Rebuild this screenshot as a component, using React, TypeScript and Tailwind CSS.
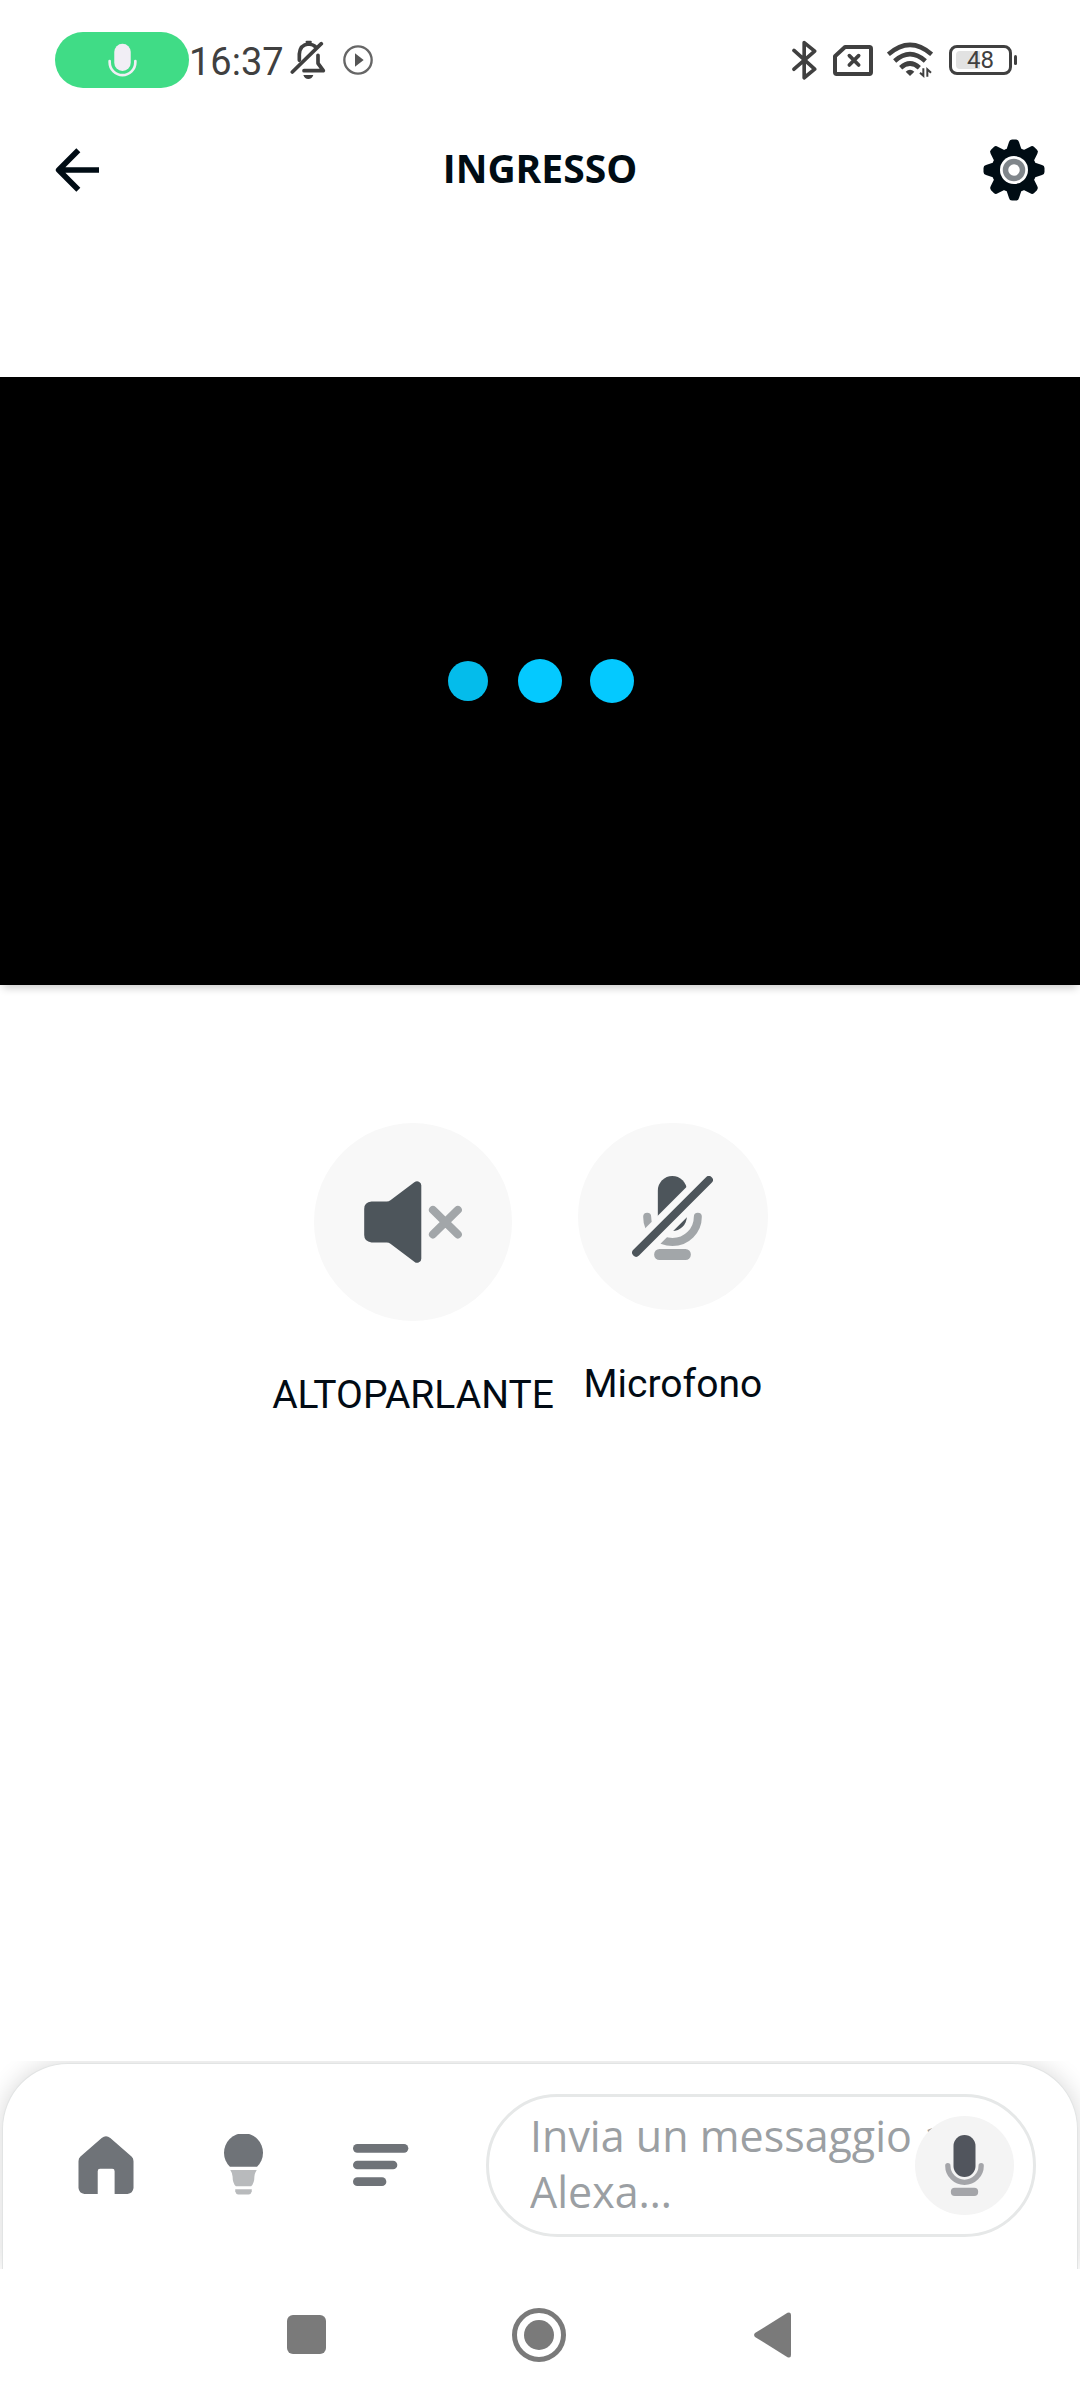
import { useState, type ReactNode } from 'react';

const BluetoothIcon = () => (
  <svg viewBox="0 0 76 120" className="w-[25px] h-10" fill="none" stroke="#404040" strokeWidth="11" strokeLinecap="round" strokeLinejoin="round">
    <path d="M6 31 69 88 37 114V7L69 33 6 88" />
  </svg>
);

const NoSimIcon = () => (
  <svg viewBox="0 0 120 93" className="w-10 h-[31px]" fill="none" stroke="#404040" strokeLinejoin="round" strokeLinecap="round">
    <path d="M36 6H109Q114 6 114 11V82Q114 87 109 87H11Q6 87 6 82V34Z" strokeWidth="12" />
    <path d="M49 32 77 60M77 32 49 60" strokeWidth="11" />
  </svg>
);

const WifiIcon = () => (
  <svg viewBox="0 0 138 108" className="w-[46px] h-9" fill="none" stroke="#404040" strokeWidth="14">
    <path d="M4 37Q69 -20 134 37" />
    <path d="M23 57Q69 16 115 57" />
    <path d="M41 77Q69 52 97 77" />
    <path d="M56 89Q69 77 82 89L69 102Z" fill="#404040" stroke="none" />
    <path d="M109 79V101L99 92M121 104V82L132 92" strokeWidth="6" />
  </svg>
);

const BellOffIcon = () => (
  <svg viewBox="0 0 111 120" className="w-[37px] h-10" fill="none" stroke="#404040" strokeWidth="11" strokeLinejoin="round" strokeLinecap="round">
    <path d="M28 61V42Q30 14 56 12Q70 13 78 22" />
    <path d="M50 6H62" strokeWidth="7" />
    <path d="M7 96 94 11" />
    <path d="M84 46V70L100 92H42" />
    <path d="M40 105H70Q66 117 55 117T40 105Z" fill="#404040" stroke="none" />
  </svg>
);

const PlayCircleIcon = () => (
  <svg viewBox="0 0 90 90" className="w-[30px] h-[30px]">
    <circle cx="45" cy="45" r="41" fill="none" stroke="#666" strokeWidth="7" />
    <path d="M36 25 62 45 36 65Z" fill="#555" />
  </svg>
);

const RecordingMicIcon = () => (
  <svg viewBox="0 0 88 102" className="w-[29px] h-[34px]">
    <rect x="19" y="2" width="50" height="82" rx="25" fill="#f1eef5" />
    <path d="M5 54V58A39 39 0 0 0 83 58V54" fill="none" stroke="#f1eef5" strokeWidth="8" strokeLinecap="round" />
  </svg>
);

const BackIcon = () => (
  <svg viewBox="0 0 132 132" className="w-11 h-11" fill="none" stroke="#000c14" strokeWidth="17">
    <path d="M132 66H10M70 7 11 66 70 125" strokeLinejoin="round" />
  </svg>
);

const TEETH = [0, 45, 90, 135, 180, 225, 270, 315];

const GearIcon = () => (
  <svg viewBox="-31 -31 62 62" className="w-[62px] h-[62px]">
    <circle r="22.5" fill="#000c14" />
    {TEETH.map(a => (
      <path
        key={a}
        d="M-8 -19 -5 -28Q-4.500 -30.500 -2 -30.500H2Q4.500 -30.500 5 -28L8 -19Z"
        fill="#000c14"
        transform={`rotate(${a})`}
      />
    ))}
    <circle r="14" fill="#fff" />
    <circle r="8.500" fill="none" stroke="#80868b" strokeWidth="5.500" />
  </svg>
);

const SpeakerOffIcon = () => (
  <svg viewBox="0 0 294 247" className="w-[98px] h-[82px]">
    <path
      d="M22 62H68Q74 62 79 58L151 4Q158 -2 165 2 172 5 172 13V234Q172 242 165 245 158 249 151 243L79 189Q74 185 68 185H22Q0 183 0 163V84Q0 64 22 62Z"
      fill="#4d555b"
    />
    <path d="M207 87 282 161M282 87 207 161" stroke="#a2a6a9" strokeWidth="24" strokeLinecap="round" />
  </svg>
);

const MicOffIcon = () => (
  <svg viewBox="0 0 242 252" className="mt-[3px] w-[81px] h-[84px]" fill="none" strokeLinecap="round">
    <rect x="77" y="0" width="87" height="165" rx="43.500" fill="#4d555b" />
    <path d="M45 122A76 76 0 0 0 197 122" stroke="#a2a6a9" strokeWidth="24" />
    <path d="M12 230 230 12" stroke="#f8f8f8" strokeWidth="65" strokeLinecap="butt" />
    <rect x="66" y="219" width="110" height="33" rx="16" fill="#a2a6a9" />
    <path d="M12 230 230 12" stroke="#4d555b" strokeWidth="24" />
  </svg>
);

const HomeIcon = () => (
  <svg viewBox="0 0 166 175" className="w-14 h-[58px]">
    <path
      d="M70 6Q83 -5 96 6L160 62Q166 67 166 76V157Q164 173 148 175H109V106Q109 99 102 99H65Q58 99 58 106V175H18Q2 173 0 157V76Q0 67 6 62Z"
      fill="#6f7378"
    />
  </svg>
);

const BulbIcon = () => (
  <svg viewBox="0 0 118 184" className="w-[39px] h-[61px]">
    <path d="M18 99A59 59 0 1 1 100 99Z" fill="#6f7378" />
    <path d="M19 109H99Q93 118 92 128 92 148 82 158H36Q26 148 26 128 25 118 19 109Z" fill="#b8babc" />
    <path d="M34 167H84V174Q82 182 75 183H43Q36 182 34 174Z" fill="#b8babc" />
  </svg>
);

const ListIcon = () => (
  <svg viewBox="0 0 168 126" className="w-14 h-[42px]" fill="#6f7378">
    <rect x="0" y="0" width="166" height="26" rx="13" />
    <rect x="0" y="50" width="133" height="26" rx="13" />
    <rect x="0" y="100" width="100" height="26" rx="13" />
  </svg>
);

const MicIcon = () => (
  <svg viewBox="0 0 116 183" className="w-[39px] h-[61px]">
    <rect x="25" y="0" width="66" height="126" rx="33" fill="#51555d" />
    <path d="M8 92A50 50 0 0 0 108 92" fill="none" stroke="#a4a5a9" strokeWidth="16" strokeLinecap="round" />
    <rect x="17" y="158" width="82" height="25" rx="12" fill="#a4a5a9" />
  </svg>
);

interface ControlProps {
  label: string;
  circle: string;
  onClick: () => void;
  children: ReactNode;
}

function CallControl({ label, circle, onClick, children }: ControlProps) {
  return (
    <button onClick={onClick} className="flex flex-col items-center gap-[50px]">
      <span className={`flex items-center justify-center rounded-full bg-[#f8f8f8] ${circle}`}>{children}</span>
      <span className="text-[39px] leading-[48px] text-[#020b14]">{label}</span>
    </button>
  );
}

export default function App() {
  const [speakerOn, setSpeakerOn] = useState(false);
  const [micOn, setMicOn] = useState(false);
  const [message, setMessage] = useState('');

  return (
    <div className="min-h-screen flex flex-col bg-white font-['Roboto',sans-serif]">
      {/* Status bar */}
      <div className="h-[120px] flex items-center justify-between pl-[55px] pr-[63px]">
        <div className="flex items-center">
          <span className="w-[134px] h-14 rounded-full bg-[#40dc86] flex items-center justify-center">
            <RecordingMicIcon />
          </span>
          <span className="pt-1 text-[38px] leading-[44px] text-[#404040]">16:37</span>
          <span className="flex items-center gap-4 ml-1.5">
            <BellOffIcon />
            <PlayCircleIcon />
          </span>
        </div>
        <div className="flex items-center">
          <BluetoothIcon />
          <span className="ml-4"><NoSimIcon /></span>
          <span className="ml-3.5"><WifiIcon /></span>
          <span className="relative ml-4 w-[63px] h-[30px] border-3 border-[#404040] rounded-lg flex items-center justify-center">
            <span className="absolute left-1 top-[3px] bottom-[3px] w-6 bg-[#e2e2e2] rounded-l-sm" />
            <span className="relative text-[24px] leading-[26px] text-[#404040]">48</span>
          </span>
          <span className="ml-0.5 w-[3px] h-2.5 rounded-sm bg-[#404040]" />
        </div>
      </div>

      {/* Header */}
      <header className="h-[100px] grid grid-cols-[1fr_auto_1fr] items-center px-[35px]">
        <button aria-label="Indietro" className="justify-self-start ml-5">
          <BackIcon />
        </button>
        <h1 className="pb-1 font-['Open_Sans',sans-serif] text-[39px] leading-[52px] font-bold text-[#000c14]">INGRESSO</h1>
        <button aria-label="Impostazioni" className="justify-self-end">
          <GearIcon />
        </button>
      </header>

      {/* Video, still connecting */}
      <div className="mt-[157px] aspect-video bg-black shadow-[0_6px_8px_-3px_rgba(0,0,0,0.2)] flex items-center justify-center gap-7">
        <span className="w-10 h-10 mx-0.5 rounded-full bg-[#04bceb]" />
        <span className="w-11 h-11 rounded-full bg-[#04c9ff]" />
        <span className="w-11 h-11 rounded-full bg-[#04c9ff]" />
      </div>

      {/* Call controls */}
      <main className="flex-1 flex items-start justify-center gap-6 pt-[138px] pr-10">
        <CallControl label="ALTOPARLANTE" circle="w-[198px] h-[198px]" onClick={() => setSpeakerOn(!speakerOn)}>
          <SpeakerOffIcon />
        </CallControl>
        <CallControl label="Microfono" circle="w-[190px] h-[187px]" onClick={() => setMicOn(!micOn)}>
          <MicOffIcon />
        </CallControl>
      </main>

      {/* Bottom navigation */}
      <div className="overflow-hidden pt-0.5 px-0.5">
        <nav className="h-[206px] rounded-t-[66px] border border-b-0 border-[#e2e4e4] bg-white shadow-[0_0_24px_rgba(0,0,0,0.16)] flex items-start pt-[30px] pl-[75px] pr-[41px]">
          <div className="h-[141px] flex items-center">
            <button aria-label="Home"><HomeIcon /></button>
            <button aria-label="Dispositivi" className="ml-[90px]"><BulbIcon /></button>
            <button aria-label="Altro" className="ml-[90px]"><ListIcon /></button>
          </div>
          <div className="relative ml-[77px] flex-1 h-[143px] rounded-full border-3 border-[#e6e8e8] pl-[41px] pr-[72px] pt-[11px]">
            <textarea
              rows={2}
              aria-label="Invia un messaggio a Alexa"
              placeholder="Invia un messaggio a Alexa…"
              value={message}
              onChange={e => setMessage(e.target.value)}
              className="block w-full h-28 resize-none overflow-hidden outline-none font-['Open_Sans',sans-serif] text-[43px] leading-[56px] text-[#51555d] placeholder:text-[#9b9fa3]"
            />
            <button
              aria-label="Parla con Alexa"
              className="absolute right-[19px] top-[19px] w-[99px] h-[99px] rounded-full bg-[#f4f4f4] flex items-center justify-center"
            >
              <MicIcon />
            </button>
          </div>
        </nav>
      </div>

      {/* System buttons */}
      <div className="h-[131px] flex items-center justify-center gap-[179px] pr-0.5">
        <button aria-label="App recenti" className="w-[54px] flex justify-center">
          <span className="w-[39px] h-[39px] rounded-md bg-[#7a7a7a]" />
        </button>
        <button aria-label="Schermata iniziale" className="w-[54px] h-[54px] rounded-full border-5 border-[#7a7a7a] flex items-center justify-center">
          <span className="w-[30px] h-[30px] rounded-full bg-[#7a7a7a]" />
        </button>
        <button aria-label="Indietro di sistema" className="w-[54px] flex justify-center">
          <svg viewBox="0 0 37 46" className="w-[37px] h-[46px]">
            <path d="M1 21 33.500 .8Q37 -.5 37 3V43Q37 46.500 33.500 45.200L1 25Q-.8 23 1 21Z" fill="#7a7a7a" />
          </svg>
        </button>
      </div>
    </div>
  );
}
